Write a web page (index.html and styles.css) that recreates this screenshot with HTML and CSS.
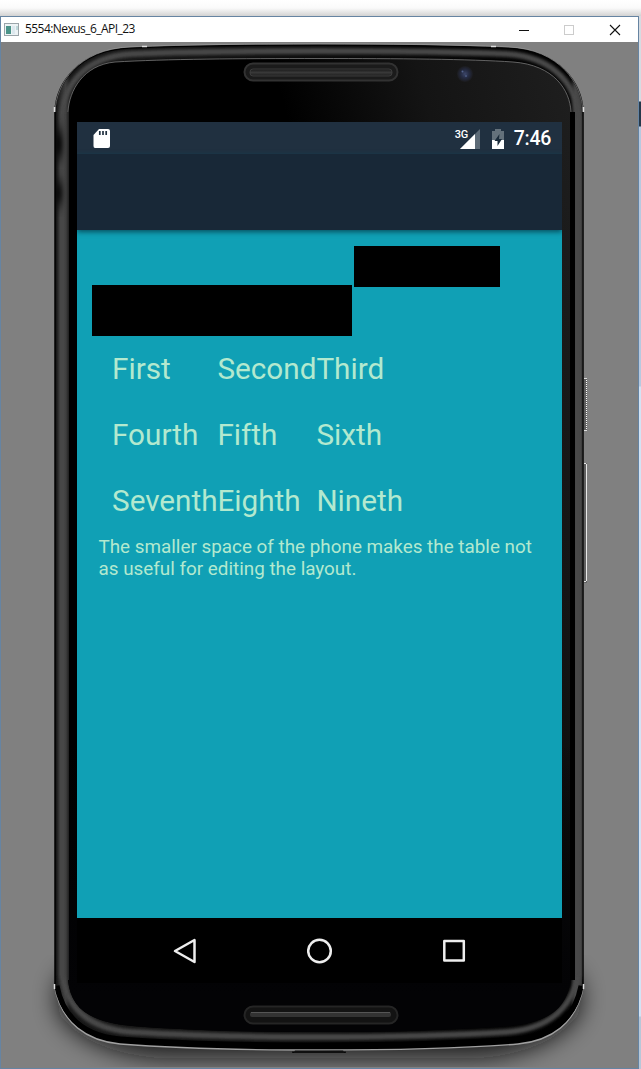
FILE: index.html
```html
<!DOCTYPE html>
<html lang="en">
<head>
<meta charset="utf-8">
<title>5554:Nexus_6_API_23</title>
<link rel="stylesheet" href="styles.css">
</head>
<body>
<div class="desktop">
<div class="window">
  <header class="titlebar">
    <svg class="app-icon" width="16" height="14" viewBox="0 0 16 14"><rect x=".5" y=".5" width="14" height="12" fill="#edf3f5" stroke="#9ba5aa"/><rect x="2" y="3" width="5" height="8" fill="#4b9489"/><rect x="8" y="3" width="3" height="8" fill="#dce8ee"/><path d="M13 3v4" stroke="#90bdc0"/></svg>
    <span class="title">5554:Nexus_6_API_23</span>
    <svg class="controls" width="102" height="12" viewBox="0 0 102 12" fill="none"><path d="M0 6.5h10" stroke="#111"/><rect x="45.5" y="1.500" width="9" height="9" stroke="#ccc"/><path d="M91 1l10 10M101 1L91 11" stroke="#111" stroke-width="1.1"/></svg>
  </header>
  <main class="stage">
    <svg class="chassis" width="638" height="1025" viewBox="1 42 638 1025">
      <defs>
        <linearGradient id="side" gradientUnits="userSpaceOnUse" x1="54" x2="584" y1="0" y2="0">
          <stop offset="0" stop-color="#080808"/><stop offset=".009" stop-color="#242424"/><stop offset=".022" stop-color="#3d3d3d"/><stop offset=".03" stop-color="#181818"/>
          <stop offset=".965" stop-color="#000"/><stop offset=".975" stop-color="#060606"/><stop offset=".983" stop-color="#484848"/><stop offset=".994" stop-color="#3f3f3f"/><stop offset="1" stop-color="#101010"/>
        </linearGradient>
        <linearGradient id="glass" gradientUnits="userSpaceOnUse" x1="290" x2="560" y1="130" y2="60"><stop offset="0" stop-color="#000"/><stop offset=".5" stop-color="#141414"/><stop offset="1" stop-color="#1e1e1e"/></linearGradient>
        <linearGradient id="fade" x1="0" x2="0" y1="0" y2="1"><stop offset=".45" stop-color="#030305" stop-opacity="0"/><stop offset=".93" stop-color="#030305"/></linearGradient>
        <linearGradient id="grille" x1="0" x2="0" y1="0" y2="1"><stop offset="0" stop-color="#171717"/><stop offset=".5" stop-color="#383838"/><stop offset="1" stop-color="#1e1e1e"/></linearGradient>
        <radialGradient id="lens"><stop offset="0" stop-color="#3c4669"/><stop offset=".5" stop-color="#252b42"/><stop offset="1" stop-color="#1b1b1d"/></radialGradient>
        <filter id="soft" x="-10%" y="-10%" width="120%" height="120%"><feGaussianBlur stdDeviation="12"/></filter>
        <filter id="bevel" x="-5%" y="-5%" width="110%" height="110%"><feGaussianBlur stdDeviation="1.700"/></filter>
        <filter id="blotch" x="-300%" y="-50%" width="700%" height="200%"><feGaussianBlur stdDeviation="2.5 8"/></filter>
        <clipPath id="bodyClip"><path id="body" d="M55 112C56 84 78 50 130 48C190 45.500 250 45 319 45S448 45.500 508 48C560 50 582 84 583 112V986C576 1022 550 1038 518 1041C455 1046 385 1047 319 1047S183 1046 120 1041C88 1038 62 1022 55 986Z"/></clipPath>
      </defs>
      <path d="M90 965H548Q590 970 578 1015Q550 1052 480 1058H158Q88 1052 60 1015Q48 970 90 965Z" fill="#0c0c0c" opacity=".85" filter="url(#soft)"/>
      <rect x="584" y="378" width="3" height="53" rx="1" fill="#606060"/><path d="M586.500 380v49" stroke="#fff" stroke-dasharray="1 1"/><path d="M584 378.500h3M584 430.500h3" stroke="#ddd"/>
      <rect x="584" y="463" width="3" height="120" rx="1" fill="#606060"/><path d="M586.500 464v117M584 463.500h2M584 581.500h2" stroke="#e8e8e8"/>
      <path d="M54.500 986C61 1024 88 1041 120 1044C183 1049 250 1050 319 1050S455 1049 518 1044C550 1041 577 1024 583.500 986" fill="#000" stroke="#a0a0a0" stroke-width="1.300"/>
      <use href="#body" fill="url(#side)" stroke="#000" stroke-width="1.500"/>
      <path d="M55 112C56 84 78 49 130 47C190 44.500 250 44 319 44S448 44.500 508 47C560 49 582 84 583 112" fill="none" stroke="#a4a4a4" stroke-width=".6"/>
      <g clip-path="url(#bodyClip)">
        <path d="M62 120C62 88 82 57 131 54C195 51 250 51 319 51S443 51 507 54C556 57 578 88 578.500 120V975C570 1013 544 1029 507 1032C443 1036 388 1037 319 1037S195 1036 131 1032C94 1029 68 1013 62 975Z" fill="none" stroke="#484848" stroke-width="6" filter="url(#bevel)"/>
        <path d="M55 986C62 1022 88 1038 120 1041C183 1046 250 1047 319 1047S455 1046 518 1041C550 1038 576 1022 583 986" fill="none" stroke="#000" stroke-width="9"/>
        <ellipse cx="59" cy="144" rx="4" ry="15" fill="#050505" filter="url(#blotch)"/><ellipse cx="59" cy="193" rx="4" ry="12" fill="#050505" filter="url(#blotch)"/>
      </g>
      <path d="M68 112C69 91 83 65 115 62C165 59 240 58.500 319 58.500S470 59 513 62C554 65 570 90 571 112V980C566 1010 548 1022 510 1026C440 1031 380 1032 319 1032S198 1031 132 1026C91 1022 71 1010 68 980Z" fill="url(#glass)"/>
      <path d="M68 500V980C71 1010 91 1022 132 1026C198 1031 250 1032 319 1032S440 1031 510 1026C548 1022 566 1010 571 980V500Z" fill="url(#fade)"/>
      <path d="M570 112H575V980H570Z" fill="#000"/>
      <path d="M68 112C69 91 83 65 115 62C165 59 240 58.500 319 58.500S470 59 513 62C554 65 570 90 571 112" fill="none" stroke="#777" stroke-width=".8"/>
      <path d="M68.500 112V980" stroke="#333" stroke-width=".7"/>
      <path d="M54.500 107v5M583.500 107v5M54.500 984v5M583.500 984v5M142 46.500h5M491 46.500h5" stroke="#ddd" stroke-width="1.500"/>
      <path d="M293 1053L295 1050.500H343L345 1053Z" fill="#101010"/><path d="M293 1051.500V1053M345 1051.500V1053" stroke="#000" stroke-width="1.500"/>
      <rect x="244.500" y="63.500" width="153" height="17" rx="8.500" fill="#1b1b1b" stroke="#323232" stroke-width="2"/><rect x="250" y="69" width="142" height="7" rx="3" fill="url(#grille)" stroke="#424242" stroke-width=".8"/>
      <rect x="244.500" y="1006.500" width="153" height="17" rx="8.500" fill="#131313" stroke="#252525" stroke-width="2"/><rect x="250" y="1012" width="141" height="5" rx="2" fill="#333"/><path d="M251 1012.500h139" stroke="#555"/>
      <circle cx="465" cy="74" r="8" fill="url(#lens)"/><circle cx="462.500" cy="71.500" r="1" fill="#53638c"/><circle cx="466" cy="76" r="1" fill="#4a597f"/>
    </svg>
    <div class="screen">
      <div class="status">
        <svg class="sd" width="17" height="20" viewBox="0 0 17 20"><path d="M6 0H15Q17 0 17 2V17Q17 19 15 19H2Q.5 19 .5 17V6Z" fill="#fff"/><path d="M6.800 2v4M10 2v4M13.200 2v4" stroke="#203040" stroke-width="1.700"/></svg>
        <div class="network"><span class="net">3G</span><svg width="20" height="20" viewBox="0 0 20 20"><path d="M20 0V20H0Z" fill="#5d6b77"/><path d="M15 5V20H0Z" fill="#fff"/></svg></div>
        <svg class="battery" width="12" height="20" viewBox="0 0 12 20"><path d="M0 2H3V0H9V2H12V20H0Z" fill="#64717b"/><path d="M0 11H12V20H0Z" fill="#fff"/><path d="M7.500 5L2.500 12H5.500V17L10 10H7Z" fill="#1b2c3b"/></svg>
        <span class="clock">7:46</span>
      </div>
      <div class="appbar"></div>
      <div class="content">
        <div class="masks"><div class="mask wide"></div><div class="mask short"></div></div>
        <div class="table"><span>First</span><span>Second</span><span>Third</span><span>Fourth</span><span>Fifth</span><span>Sixth</span><span>Seventh</span><span>Eighth</span><span>Nineth</span></div>
        <p class="note">The smaller space of the phone makes the table not<br>as useful for editing the layout.</p>
      </div>
      <nav class="nav">
        <svg width="24" height="26" viewBox="0 0 24 26" fill="none" stroke="#eee" stroke-width="2.500" stroke-linejoin="round"><path d="M21.500 2V24L2 13Z"/></svg>
        <svg width="26" height="26" viewBox="0 0 26 26" fill="none" stroke="#eee" stroke-width="2.500"><circle cx="12.500" cy="13" r="11.300"/></svg>
        <svg width="24" height="24" viewBox="0 0 24 24" fill="none" stroke="#eee" stroke-width="2.500" stroke-linejoin="round"><rect x="2.300" y="2" width="19.500" height="19.500"/></svg>
      </nav>
    </div>
  </main>
</div>
<div class="behind"></div>
</div>
</body>
</html>
```
FILE: styles.css
```css
* { box-sizing: border-box; }
body { margin: 0; font-family: Roboto, sans-serif; }
svg { display: block; flex: none; }
.desktop { display: flex; width: 641px; height: 1069px; padding-top: 16px; overflow: hidden; background: linear-gradient(#fff 0, #fafafa 8px, #d2d2d2 16px); }
.window { width: 639px; height: 1053px; border: 1px solid #6684a2; background: #808080; flex: none; }
.behind { width: 2px; height: 1053px; background: linear-gradient(#d6dbe1 0 85px, #25384a 86px 110px, #b7c9df 111px 370px, #d3e3f4 371px 1000px, #b7c7d8 1001px); }
.titlebar { display: flex; align-items: center; height: 25px; padding: 0 17px 0 3px; background: #fff; }
.title { margin: -2px 0 0 5px; font: 12px/20px "Open Sans", sans-serif; letter-spacing: -.55px; color: #111; }
.controls { margin-left: auto; }
.stage { display: grid; height: 1025px; background: #808080; }
.chassis { grid-area: 1 / 1; }
.screen { grid-area: 1 / 1; display: flex; flex-direction: column; width: 485px; height: 861px; margin: 80px 0 0 76px; overflow: hidden; background: #10a0b5; z-index: 1; }
.status { display: flex; align-items: center; height: 32px; padding: 2px 11px 0 16px; background: #203040; color: #fff; }
.network { display: flex; align-items: center; margin-left: auto; }
.net { align-self: flex-start; margin-right: -8px; font: 500 11px/11px Roboto, sans-serif; letter-spacing: -.4px; }
.battery { margin: 0 10px 0 12px; }
.clock { font-size: 19.5px; line-height: 30px; letter-spacing: -.3px; font-weight: 500; }
.appbar { height: 76px; background: #182837; box-shadow: 0 2px 5px #07505f; }
.content { flex: 1; padding: 16px 15px 0; }
.masks { display: flex; gap: 2px; height: 91px; }
.mask { background: #000; }
.wide { width: 260px; height: 51px; margin-top: 39px; }
.short { width: 146px; height: 41px; }
.table { display: grid; grid-template-columns: 105.4px 99px 100px; grid-auto-rows: 66px; padding-left: 20px; font-size: 29.7px; line-height: 64px; color: #b3e9cf; }
.note { margin: 1px 0 0 6.5px; font-size: 18.85px; line-height: 22px; color: #b3e9cf; white-space: nowrap; }
.nav { display: flex; justify-content: space-between; align-items: center; height: 65px; padding: 0 96px; background: #000; }
```
